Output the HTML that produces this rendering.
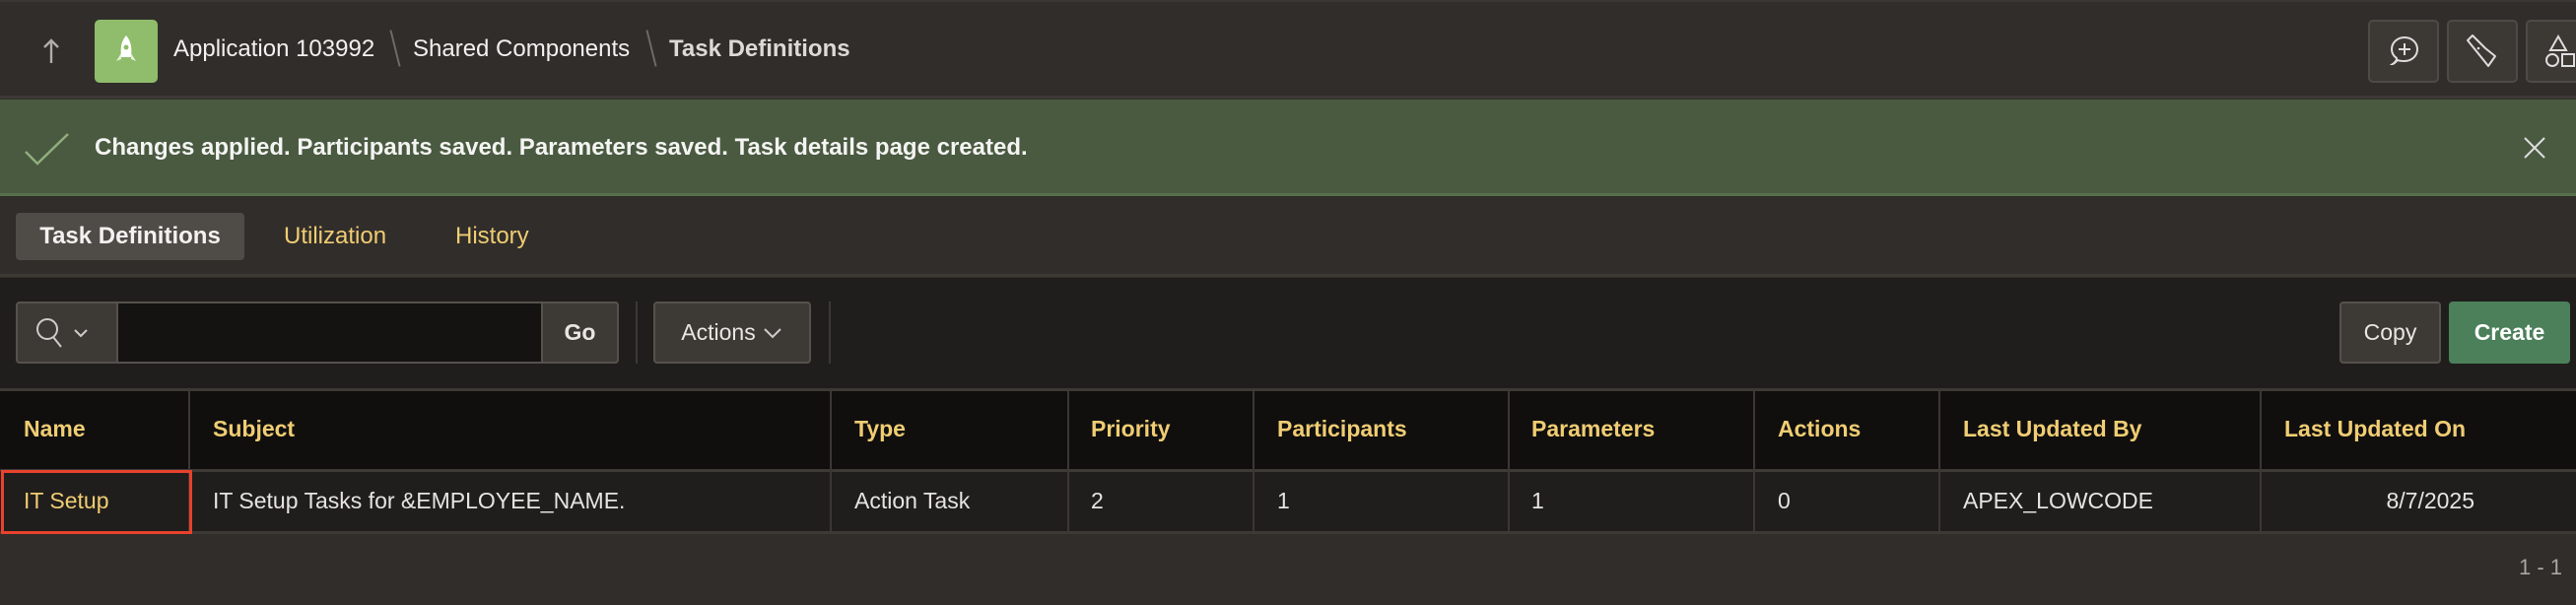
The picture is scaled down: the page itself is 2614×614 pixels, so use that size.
<!DOCTYPE html>
<html><head><meta charset="utf-8"><style>
*{margin:0;padding:0;box-sizing:border-box}
body{width:2614px;height:614px;background:#312d2a;font-family:"Liberation Sans",sans-serif;position:relative;overflow:hidden;color:#e8e6e3}
.a{position:absolute}
.hdr{left:0;top:0;width:2614px;height:100px;background:#312d2a;border-top:2px solid #3a3633;border-bottom:3px solid #3d3935}
.bc{top:36px;font-size:24px;color:#f2f0ee;white-space:nowrap}
.sl{top:30px;width:2px;height:38px;background:#6e6a66;transform:rotate(-14deg)}
.ib{top:20px;width:72px;height:64px;border:2px solid #4e4a46;border-radius:5px;background:#3c3834}
.ban{left:0;top:101px;width:2614px;height:98px;background:#4a5a41;border-bottom:3px solid #56704c}
.tabs{left:0;top:200px;width:2614px;height:81px;background:#312d2a;border-bottom:3px solid #3d3935}
.tb{top:338px;height:40px}
.tool{left:0;top:282px;width:2614px;height:112px;background:#201e1c}
.btn{background:#3d3935;border:2px solid #55514d;border-radius:4px;color:#e8e6e3;font-size:23px;display:flex;align-items:center;justify-content:center}
.th{left:0;top:394px;width:2614px;height:82px;background:#100f0e;border-top:3px solid #3d3935}
.tr{left:0;top:476px;width:2614px;height:66px;background:#201e1c;border-top:3px solid #3d3935;border-bottom:3px solid #3d3935}
.vl{width:2px;background:#3a3734}
.h{top:422px;font-size:23px;font-weight:bold;color:#f0cd73}
.c{top:495px;font-size:23px;color:#e6e4e1}
</style></head><body>
<div class="a hdr"></div>
<svg class="a" style="left:42px;top:38px" width="20" height="28" viewBox="0 0 20 28"><path d="M10 26V3M3 10l7-7 7 7" stroke="#b0aca8" stroke-width="2.4" fill="none"/></svg>
<div class="a" style="left:96px;top:20px;width:64px;height:64px;background:#8fbd6b;border-radius:5px"></div>
<svg class="a" style="left:112px;top:34px" width="32" height="36" viewBox="0 0 32 36"><path d="M16 2c-5 6-6 12-5 22h10c1-10 0-16-5-22z" fill="#fff"/><path d="M11 20l-5 8 5-2zM21 20l5 8-5-2z" fill="#e6f0dc"/><circle cx="16" cy="14" r="2.5" fill="#8fbd6b"/></svg>
<div class="a bc" style="left:176px">Application 103992</div>
<div class="a sl" style="left:400px"></div>
<div class="a bc" style="left:419px">Shared Components</div>
<div class="a sl" style="left:660px"></div>
<div class="a bc" style="left:679px;font-weight:bold;color:#dcdad7">Task Definitions</div>
<div class="a ib" style="left:2403px"></div>
<div class="a ib" style="left:2483px"></div>
<div class="a ib" style="left:2563px"></div>
<svg class="a" style="left:2420px;top:34px" width="40" height="36" viewBox="0 0 40 36"><path d="M8 31c3-2 4-4 4-6-3-2-5-5-5-9 0-7 6-12 13-12s13 5 13 12-6 12-13 12c-3 0-5 0-7-1-2 2-4 4-5 4z" stroke="#ddd" stroke-width="2" fill="none"/><path d="M20 10v12M14 16h12" stroke="#ddd" stroke-width="2"/></svg>
<svg class="a" style="left:2500px;top:34px" width="40" height="36" viewBox="0 0 40 36"><path d="M4 7l5-5 13 13 10 8-7 10-8-10z" stroke="#ddd" stroke-width="2" fill="none" stroke-linejoin="round"/><circle cx="15" cy="15" r="1.3" fill="#ddd"/></svg>
<svg class="a" style="left:2580px;top:34px" width="34" height="36" viewBox="0 0 34 36"><path d="M16 3l8 14H8z" stroke="#ddd" stroke-width="2" fill="none"/><circle cx="10" cy="27" r="6" stroke="#ddd" stroke-width="2" fill="none"/><rect x="20" y="21" width="12" height="12" stroke="#ddd" stroke-width="2" fill="none"/></svg>
<div class="a ban"></div>
<svg class="a" style="left:24px;top:134px" width="48" height="34" viewBox="0 0 48 34"><path d="M2 20l12 12L45 2" stroke="#8fae7e" stroke-width="2.5" fill="none"/></svg>
<div class="a" style="left:96px;top:136px;font-size:24px;font-weight:bold;color:#f4f4f2">Changes applied. Participants saved. Parameters saved. Task details page created.</div>
<svg class="a" style="left:2560px;top:138px" width="24" height="24" viewBox="0 0 24 24"><path d="M2 2l20 20M22 2L2 22" stroke="#ddd" stroke-width="2"/></svg>
<div class="a tabs"></div>
<div class="a" style="left:16px;top:216px;width:232px;height:48px;background:#4f4b47;border-radius:4px;font-size:24px;font-weight:bold;display:flex;align-items:center;justify-content:center;color:#f4f2f0">Task Definitions</div>
<div class="a" style="left:288px;top:226px;font-size:24px;color:#f0cd73">Utilization</div>
<div class="a" style="left:462px;top:226px;font-size:24px;color:#f0cd73">History</div>
<div class="a tool"></div>
<div class="a" style="left:16px;top:306px;width:612px;height:63px;background:#141312;border:2px solid #55514d;border-radius:4px"></div>
<div class="a" style="left:16px;top:306px;width:104px;height:63px;background:#3d3935;border:2px solid #55514d;border-radius:4px 0 0 4px"></div>
<svg class="a" style="left:34px;top:321px" width="64" height="36" viewBox="0 0 64 36"><circle cx="14" cy="13" r="10" stroke="#ccc" stroke-width="2" fill="none"/><path d="M20 21l8 10M42 14l6 6 6-6" stroke="#ccc" stroke-width="2" fill="none"/></svg>
<div class="a btn" style="left:549px;top:306px;width:79px;height:63px;border-radius:0 4px 4px 0;font-weight:bold">Go</div>
<div class="a vl" style="left:645px;top:306px;height:63px;background:#3d3935"></div>
<div class="a btn" style="left:663px;top:306px;width:160px;height:63px">Actions <svg width="22" height="14" viewBox="0 0 22 14" style="margin-left:6px"><path d="M3 3l8 8 8-8" stroke="#ccc" stroke-width="2" fill="none"/></svg></div>
<div class="a vl" style="left:841px;top:306px;height:63px;background:#3d3935"></div>
<div class="a btn" style="left:2374px;top:306px;width:103px;height:63px">Copy</div>
<div class="a btn" style="left:2485px;top:306px;width:123px;height:63px;background:#4b805a;border-color:#4b805a;font-weight:bold;color:#fff">Create</div>
<div class="a th"></div>
<div class="a tr"></div>
<div class="a vl" style="left:191px;top:397px;height:142px"></div>
<div class="a vl" style="left:842px;top:397px;height:142px"></div>
<div class="a vl" style="left:1083px;top:397px;height:142px"></div>
<div class="a vl" style="left:1271px;top:397px;height:142px"></div>
<div class="a vl" style="left:1530px;top:397px;height:142px"></div>
<div class="a vl" style="left:1779px;top:397px;height:142px"></div>
<div class="a vl" style="left:1967px;top:397px;height:142px"></div>
<div class="a vl" style="left:2293px;top:397px;height:142px"></div>
<div class="a h" style="left:24px">Name</div>
<div class="a h" style="left:216px">Subject</div>
<div class="a h" style="left:867px">Type</div>
<div class="a h" style="left:1107px">Priority</div>
<div class="a h" style="left:1296px">Participants</div>
<div class="a h" style="left:1554px">Parameters</div>
<div class="a h" style="left:1804px">Actions</div>
<div class="a h" style="left:1992px">Last Updated By</div>
<div class="a h" style="left:2318px">Last Updated On</div>
<div class="a" style="left:1px;top:477px;width:194px;height:65px;border:3px solid #e8412c"></div>
<div class="a c" style="left:24px;color:#f0cd73">IT Setup</div>
<div class="a c" style="left:216px">IT Setup Tasks for &amp;EMPLOYEE_NAME.</div>
<div class="a c" style="left:867px">Action Task</div>
<div class="a c" style="left:1107px">2</div>
<div class="a c" style="left:1296px">1</div>
<div class="a c" style="left:1554px">1</div>
<div class="a c" style="left:1804px">0</div>
<div class="a c" style="left:1992px">APEX_LOWCODE</div>
<div class="a c" style="left:2410px;width:101px;text-align:right">8/7/2025</div>
<div class="a" style="left:2540px;top:563px;width:60px;text-align:right;font-size:22px;color:#aaa6a2">1 - 1</div>
</body></html>
